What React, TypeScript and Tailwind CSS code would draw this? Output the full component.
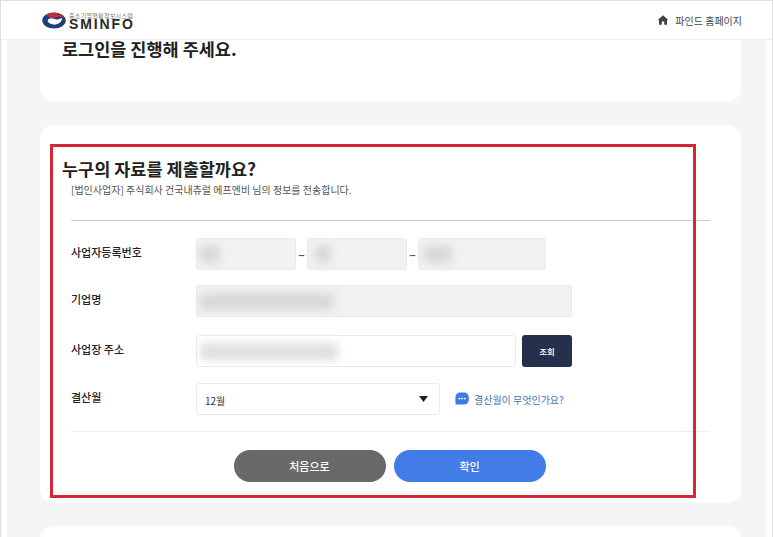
const font = { fontFamily: '"Noto Sans CJK KR", "Noto Sans", sans-serif' };

function Blur({ width, height = "h-[18px]", left = "ml-[3px]", color = "bg-[#d8d8d8]" }: { width: string; height?: string; left?: string; color?: string }) {
  return <div className={`${width} ${height} ${left} ${color} rounded-sm blur-[4px]`} />;
}

function Row({ label, children, className }: { label: string; children: React.ReactNode; className: string }) {
  return (
    <div className={`flex items-center ${className}`}>
      <div className="w-[125px] -translate-y-[2px] text-[11px] font-medium text-[#222]">{label}</div>
      {children}
    </div>
  );
}

export default function App() {
  return (
    <div style={font} className="relative flex h-screen w-full flex-col overflow-hidden border-x border-t border-[#dedede] bg-white">
      <header className="flex h-[39px] shrink-0 items-center justify-between border-b border-[#eeeeee] bg-white pl-[41px] pr-[30px]">
        <div className="flex items-center gap-[3px]">
          <svg width="24" height="17" viewBox="0 0 24 17">
            <ellipse cx="12" cy="8.5" rx="11.7" ry="8" fill="#1f3f7f" />
            <path d="M4 3C8.5 -0.6 19.5 -0.4 23.7 7.6C20.5 4.4 16.5 4 13.4 5.6C10.4 7 7 5.4 4 3Z" fill="#c8283c" />
            <path d="M5.6 8.6C6.6 6 9.6 5.6 11.8 6.8C14.4 8.2 17.2 7.4 20 6C20.4 10 15.6 13 11.4 12.6C8.2 12.2 6 10.8 5.6 8.6Z" fill="#ffffff" />
          </svg>
          <div className="mt-[2px] flex flex-col">
            <span className="text-[6px] leading-[7px] tracking-[0.3px] text-[#777]">중소기업현황정보시스템</span>
            <span style={{ fontFamily: '"Liberation Sans", sans-serif' }} className="text-[14px] font-bold leading-[11px] tracking-[1.9px] text-[#2a2a2a]">
              SMINFO
            </span>
          </div>
        </div>
        <div className="flex items-center gap-[7px] text-[10px] text-[#444]">
          <svg width="10" height="10" viewBox="0 0 10 10">
            <path fillRule="evenodd" d="M5 0.3L10 4.8L9 5.4V9.8H6.2V6.6H3.8V9.8H1V5.4L0 4.8Z" fill="#444" />
          </svg>
          <span>파인드 홈페이지</span>
        </div>
      </header>

      <main className="mx-[6px] flex flex-1 flex-col gap-[23px] bg-[#f5f5f5] pl-[33px] pr-[25px]">
        <section className="h-[62px] shrink-0 rounded-b-[14px] bg-white pl-[22px]">
          <h2 className="text-[17.5px] font-bold leading-[18px] text-[#222]">로그인을 진행해 주세요.</h2>
        </section>

        <section className="h-[378px] shrink-0 rounded-[14px] bg-white pl-[22px] pr-[31px] pt-[33px]">
          <h1 className="text-[17.5px] font-bold leading-[22px] text-[#222]">누구의 자료를 제출할까요?</h1>
          <p className="ml-[9px] mt-[2px] text-[10px] leading-[16px] text-[#555]">[법인사업자] 주식회사 건국내츄럴 에프엔비 님의 정보를 전송합니다.</p>
          <div className="ml-[9px] mt-[22px] border-t border-[#cccccc]" />

          <div className="ml-[9px]">
            <Row label="사업자등록번호" className="mt-[17px]">
              <div className="flex h-[32px] w-[100px] items-center rounded-[3px] border border-[#eaeaea] bg-[#f2f2f2]"><Blur width="w-[20px]" /></div>
              <span className="w-[11px] text-center text-[12px] font-bold text-[#555]">–</span>
              <div className="flex h-[32px] w-[100px] items-center rounded-[3px] border border-[#eaeaea] bg-[#f2f2f2]"><Blur width="w-[16px]" left="ml-[7px]" /></div>
              <span className="w-[11px] text-center text-[12px] font-bold text-[#555]">–</span>
              <div className="flex h-[32px] w-[128px] items-center rounded-[3px] border border-[#eaeaea] bg-[#f2f2f2]"><Blur width="w-[28px]" left="ml-[5px]" /></div>
            </Row>
            <Row label="기업명" className="mt-[15px]">
              <div className="flex h-[32px] w-[376px] items-center rounded-[3px] border border-[#eaeaea] bg-[#f2f2f2]"><Blur width="w-[134px]" height="h-[17px]" /></div>
            </Row>
            <Row label="사업장 주소" className="mt-[18px]">
              <div className="flex h-[32px] w-[320px] items-center rounded-[3px] border border-[#ececec] bg-white"><Blur width="w-[138px]" height="h-[17px]" color="bg-[#e0e0e0]" /></div>
              <button className="ml-[6px] h-[32px] w-[50px] rounded-[3px] bg-[#25304d] text-[8.5px] font-medium text-white">조회</button>
            </Row>
            <Row label="결산월" className="mt-[16px]">
              <div className="flex h-[32px] w-[244px] items-center justify-between rounded-[3px] border border-[#ececec] bg-white pl-[8px] pr-[11px] text-[10px] text-[#333]">
                <span className="translate-y-px">12월</span>
                <svg width="9" height="6" viewBox="0 0 9 6"><path d="M0 0H9L4.5 6Z" fill="#222" /></svg>
              </div>
              <svg className="ml-[15px]" width="14" height="14" viewBox="0 0 14 14">
                <path d="M5 0.5H9C11.8 0.5 13.8 2.5 13.8 5.8V7.5C13.8 10.6 11.8 12.5 9 12.5H1C0.4 12.5 0.2 12 0.5 11.6C0.7 11.2 0.5 10.6 0.4 10V5.8C0.4 2.5 2.2 0.5 5 0.5Z" fill="#3f7be6" />
                <circle cx="4.4" cy="6.6" r="0.9" fill="#fff" />
                <circle cx="7.1" cy="6.6" r="0.9" fill="#fff" />
                <circle cx="9.8" cy="6.6" r="0.9" fill="#fff" />
              </svg>
              <span className="ml-[5px] text-[10px] text-[#4a74ad]">결산월이 무엇인가요?</span>
            </Row>
            <div className="mt-[16px] border-t border-[#eeeeee]" />
            <div className="mt-[18px] flex justify-center gap-[8px] pr-[2px]">
              <button className="h-[32px] w-[152px] rounded-full bg-[#696969] text-[11px] font-medium text-white">처음으로</button>
              <button className="h-[32px] w-[152px] rounded-full bg-[#427ce6] text-[11px] font-medium text-white">확인</button>
            </div>
          </div>
        </section>

        <section className="h-[60px] shrink-0 rounded-t-[14px] bg-white" />
      </main>

      <div className="pointer-events-none absolute left-[49px] top-[143px] h-[354px] w-[646px] border-[3px] border-[#d12a36]" />
    </div>
  );
}
